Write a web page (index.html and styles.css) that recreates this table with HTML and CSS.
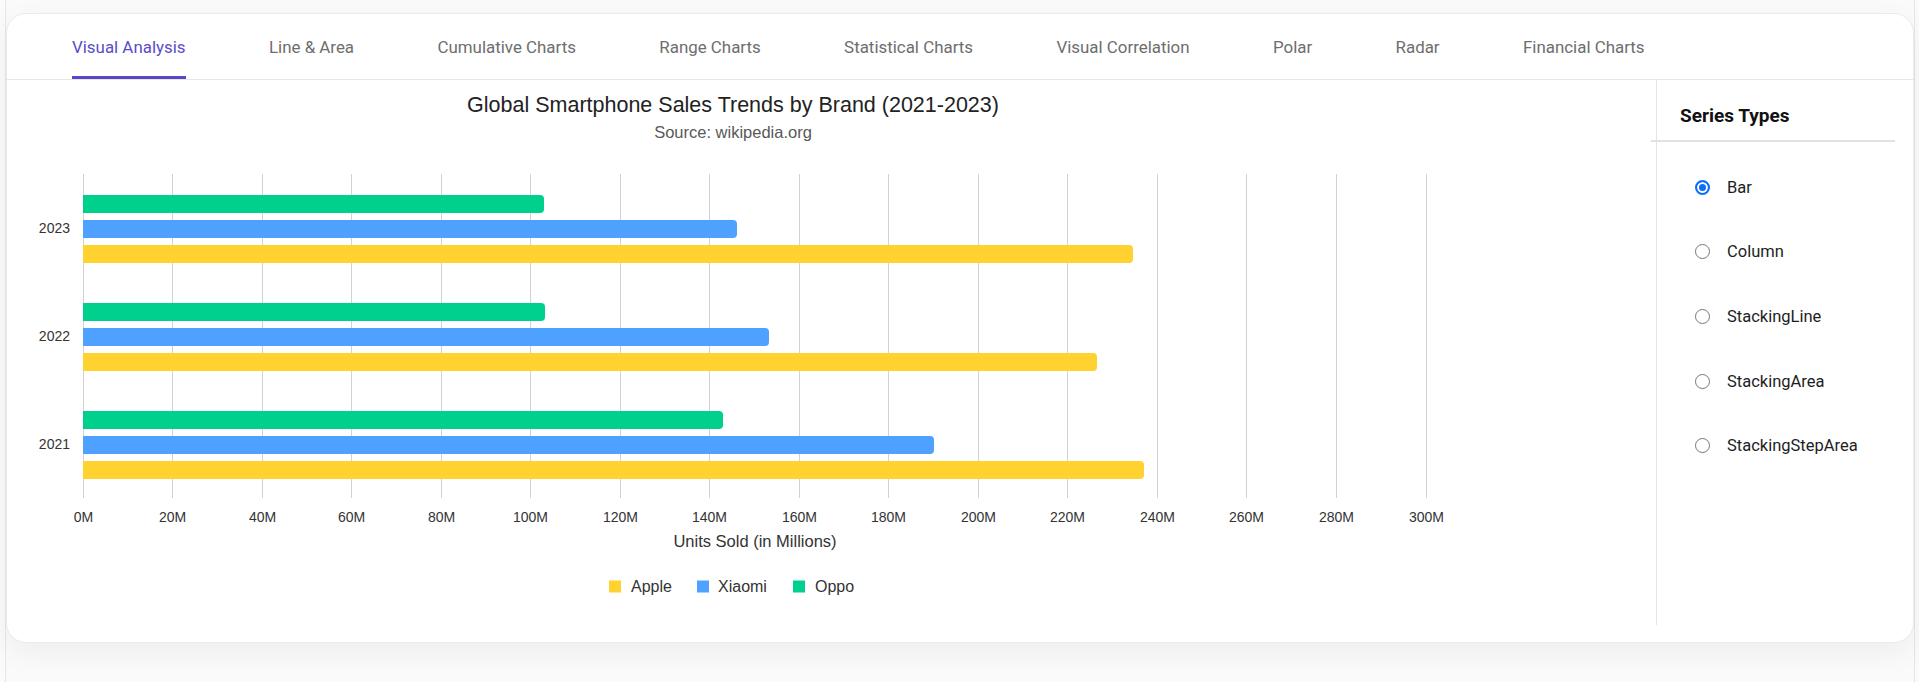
FILE: index.html
```html
<!DOCTYPE html>
<html lang="en">
<head>
<meta charset="utf-8">
<title>Visual Analysis - Bar Chart</title>
<link rel="stylesheet" href="styles.css">
</head>
<body>
<div class="page">
  <div class="card">
    <nav class="tabs">
      <div class="tab active">Visual Analysis</div>
      <div class="tab">Line &amp; Area</div>
      <div class="tab">Cumulative Charts</div>
      <div class="tab">Range Charts</div>
      <div class="tab">Statistical Charts</div>
      <div class="tab">Visual Correlation</div>
      <div class="tab">Polar</div>
      <div class="tab">Radar</div>
      <div class="tab">Financial Charts</div>
    </nav>
    <div class="content">
      <div class="chart">
        <svg width="1649" height="545" viewBox="0 0 1649 545" xmlns="http://www.w3.org/2000/svg">
          <text class="c-title" x="726" y="32" text-anchor="middle">Global Smartphone Sales Trends by Brand (2021-2023)</text>
          <text class="c-sub" x="726" y="58" text-anchor="middle">Source: wikipedia.org</text>
          <g class="grid">
            <line x1="76.5" y1="94" x2="76.5" y2="418"/>
            <line x1="165.5" y1="94" x2="165.5" y2="418"/>
            <line x1="255.5" y1="94" x2="255.5" y2="418"/>
            <line x1="344.5" y1="94" x2="344.5" y2="418"/>
            <line x1="434.5" y1="94" x2="434.5" y2="418"/>
            <line x1="523.5" y1="94" x2="523.5" y2="418"/>
            <line x1="613.5" y1="94" x2="613.5" y2="418"/>
            <line x1="702.5" y1="94" x2="702.5" y2="418"/>
            <line x1="792.5" y1="94" x2="792.5" y2="418"/>
            <line x1="881.5" y1="94" x2="881.5" y2="418"/>
            <line x1="971.5" y1="94" x2="971.5" y2="418"/>
            <line x1="1060.5" y1="94" x2="1060.5" y2="418"/>
            <line x1="1150.5" y1="94" x2="1150.5" y2="418"/>
            <line x1="1239.5" y1="94" x2="1239.5" y2="418"/>
            <line x1="1329.5" y1="94" x2="1329.5" y2="418"/>
            <line x1="1419.5" y1="94" x2="1419.5" y2="418"/>
          </g>
          <g class="bars">
            <path class="oppo" d="M76 115 H533 Q537 115 537 119 V129 Q537 133 533 133 H76 Z"/>
            <path class="xiaomi" d="M76 140 H726 Q730 140 730 144 V154 Q730 158 726 158 H76 Z"/>
            <path class="apple" d="M76 165 H1122 Q1126 165 1126 169 V179 Q1126 183 1122 183 H76 Z"/>
            <path class="oppo" d="M76 223 H534 Q538 223 538 227 V237 Q538 241 534 241 H76 Z"/>
            <path class="xiaomi" d="M76 248 H758 Q762 248 762 252 V262 Q762 266 758 266 H76 Z"/>
            <path class="apple" d="M76 273 H1086 Q1090 273 1090 277 V287 Q1090 291 1086 291 H76 Z"/>
            <path class="oppo" d="M76 331 H712 Q716 331 716 335 V345 Q716 349 712 349 H76 Z"/>
            <path class="xiaomi" d="M76 356 H923 Q927 356 927 360 V370 Q927 374 923 374 H76 Z"/>
            <path class="apple" d="M76 381 H1133 Q1137 381 1137 385 V395 Q1137 399 1133 399 H76 Z"/>
          </g>
          <g class="ylabels" text-anchor="end">
            <text x="63" y="153">2023</text>
            <text x="63" y="261">2022</text>
            <text x="63" y="369">2021</text>
          </g>
          <g class="xlabels" text-anchor="middle">
            <text x="76.5" y="442">0M</text>
            <text x="165.5" y="442">20M</text>
            <text x="255.5" y="442">40M</text>
            <text x="344.5" y="442">60M</text>
            <text x="434.5" y="442">80M</text>
            <text x="523.5" y="442">100M</text>
            <text x="613.5" y="442">120M</text>
            <text x="702.5" y="442">140M</text>
            <text x="792.5" y="442">160M</text>
            <text x="881.5" y="442">180M</text>
            <text x="971.5" y="442">200M</text>
            <text x="1060.5" y="442">220M</text>
            <text x="1150.5" y="442">240M</text>
            <text x="1239.5" y="442">260M</text>
            <text x="1329.5" y="442">280M</text>
            <text x="1419.5" y="442">300M</text>
          </g>
          <text class="c-axis" x="748" y="467" text-anchor="middle">Units Sold (in Millions)</text>
          <g class="legend">
            <rect class="apple" x="602" y="500.5" width="12" height="12"/>
            <text x="624" y="512">Apple</text>
            <rect class="xiaomi" x="690" y="500.5" width="12" height="12"/>
            <text x="711" y="512">Xiaomi</text>
            <rect class="oppo" x="786" y="500.5" width="12" height="12"/>
            <text x="808" y="512">Oppo</text>
          </g>
        </svg>
      </div>
      <aside class="panel">
        <div class="panel-head">Series Types</div>
        <ul class="options">
          <li class="option"><span class="radio checked"></span>Bar</li>
          <li class="option"><span class="radio"></span>Column</li>
          <li class="option"><span class="radio"></span>StackingLine</li>
          <li class="option"><span class="radio"></span>StackingArea</li>
          <li class="option"><span class="radio"></span>StackingStepArea</li>
        </ul>
      </aside>
    </div>
  </div>
</div>
</body>
</html>
```
FILE: styles.css
```css
html, body {
  margin: 0;
  padding: 0;
}

body {
  background: #fafafa;
  font-family: Roboto, "Noto Sans", sans-serif;
}

.page {
  margin-left: 5px;
  width: 1910px;
  min-height: 682px;
  box-sizing: border-box;
  border-left: 1px solid #e6e6e6;
  border-right: 1px solid #e6e6e6;
  padding-top: 13px;
}

.card {
  background: #ffffff;
  border: 1px solid #ebebeb;
  border-radius: 20px;
  box-shadow: 0 10px 30px rgba(0, 0, 0, 0.05);
  padding-bottom: 17px;
}

.tabs {
  display: flex;
  height: 66px;
  box-sizing: border-box;
  border-bottom: 1px solid #e7e7e7;
  padding-left: 65px;
  gap: 83.4px;
}

.tab {
  display: flex;
  align-items: center;
  font-size: 16.9px;
  color: #6e6e6e;
  white-space: nowrap;
}

.tab.active {
  color: #5a4dc8;
  box-shadow: inset 0 -3px 0 #5b47c6;
}

.content {
  display: flex;
  height: 545px;
}

.chart {
  width: 1649px;
  flex: none;
}

.chart svg {
  display: block;
  font-family: "Liberation Sans", Arial, sans-serif;
}

.c-title {
  font-size: 21.5px;
  fill: #222222;
}

.c-sub {
  font-size: 16.5px;
  fill: #595959;
}

.c-axis {
  font-size: 16.5px;
  fill: #333333;
}

.grid line {
  stroke: #d2d2d2;
  stroke-width: 1;
}

.ylabels text,
.xlabels text {
  font-size: 14px;
  fill: #333333;
}

.legend text {
  font-size: 16px;
  fill: #333333;
}

.oppo {
  fill: #00d08e;
}

.xiaomi {
  fill: #4fa1ff;
}

.apple {
  fill: #ffd22f;
}

.panel {
  flex: 1;
  border-left: 1px solid #e3e3e3;
}

.panel-head {
  margin-left: -6px;
  margin-right: 18px;
  padding: 24px 0 12px 29px;
  font-size: 19px;
  font-weight: 700;
  line-height: 24px;
  color: #111111;
  border-bottom: 2px solid #e2e2e2;
}

.options {
  list-style: none;
  margin: 0;
  padding: 13px 0 0 38px;
}

.option {
  height: 64.6px;
  display: flex;
  align-items: center;
  gap: 17px;
  font-size: 16.5px;
  color: #1e1e1e;
}

.radio {
  width: 15px;
  height: 15px;
  flex: none;
  box-sizing: border-box;
  border-radius: 50%;
  border: 1px solid #767676;
  background: #ffffff;
}

.radio.checked {
  border: 2px solid #0b6efd;
  background: #0b6efd;
  box-shadow: inset 0 0 0 2px #ffffff;
}
```
